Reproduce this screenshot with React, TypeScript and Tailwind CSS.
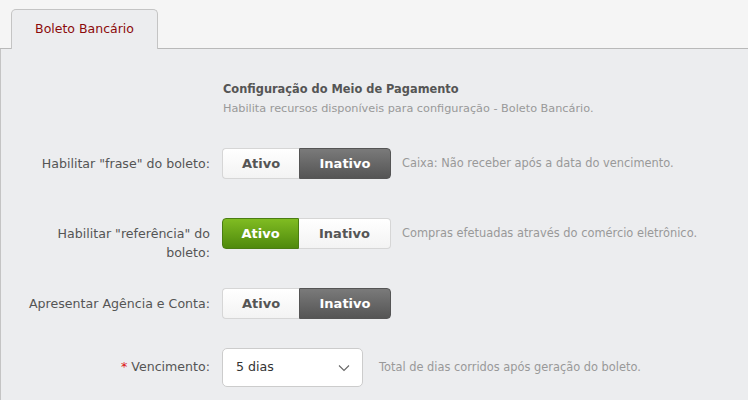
import React from "react";

function Toggle({ on }: { on: boolean }) {
  return (
    <div className="flex h-[31px] w-[169px] shrink-0 rounded-[4px] text-[13px] font-bold">
      <div
        className={
          on
            ? "flex w-[77px] items-center justify-center rounded-l-[4px] border border-[#4a7d12] bg-gradient-to-b from-[#80bc22] to-[#4f8a0c] text-white"
            : "flex w-[77px] items-center justify-center rounded-l-[4px] border border-r-0 border-[#d6d6d6] bg-gradient-to-b from-white to-[#f3f3f3] text-[#555]"
        }
      >
        Ativo
      </div>
      <div
        className={
          on
            ? "flex flex-1 items-center justify-center rounded-r-[4px] border border-l-0 border-[#d6d6d6] bg-gradient-to-b from-white to-[#f3f3f3] text-[#555]"
            : "flex flex-1 items-center justify-center rounded-r-[4px] border border-[#555] bg-gradient-to-b from-[#7a7a7a] to-[#555] text-white"
        }
      >
        Inativo
      </div>
    </div>
  );
}

function Row({ label, children, help }: { label: React.ReactNode; children: React.ReactNode; help: string }) {
  return (
    <div className="flex h-[70px] items-start">
      <div className="w-[210px] shrink-0 pr-[1px] pt-[6px] text-right text-[12.6px] leading-[19px] text-[#555]">{label}</div>
      <div className="ml-[11px]">{children}</div>
      <div className="ml-[11px] pt-[6px] text-[11.4px] leading-[19px] text-[#999]">{help}</div>
    </div>
  );
}

export default function App() {
  return (
    <div className="h-[400px] w-[748px] overflow-hidden bg-[#f5f5f5]" style={{ fontFamily: '"DejaVu Sans", Verdana, sans-serif' }}>
      <div className="flex h-[49px] items-end border-b border-[#b9b9b9] pl-[11px]">
        <div className="-mb-px flex h-[40px] w-[147px] items-center justify-center rounded-t-[5px] border border-b-0 border-[#c4c4c4] bg-[#ecedef] pb-[1px] text-[12.5px] text-[#8b0a0a]">
          Boleto Bancário
        </div>
      </div>
      <div className="h-[351px] border-l border-[#c4c4c4] bg-[#ecedef]">
        <div className="pl-[222px] pt-[31px]">
          <div className="text-[11.4px] font-bold leading-[18px] text-[#555]">Configuração do Meio de Pagamento</div>
          <div className="mt-[2px] text-[11.25px] leading-[17px] text-[#999]">Habilita recursos disponíveis para configuração - Boleto Bancário.</div>
        </div>
        <div className="mt-[31px]">
          <Row label={'Habilitar "frase" do boleto:'} help="Caixa: Não receber após a data do vencimento.">
            <Toggle on={false} />
          </Row>
          <Row label={<>Habilitar "referência" do<br />boleto:</>} help="Compras efetuadas através do comércio eletrônico.">
            <Toggle on={true} />
          </Row>
          <div className="flex h-[60px] items-start">
            <div className="w-[210px] shrink-0 pr-[1px] pt-[6px] text-right text-[12.6px] leading-[19px] text-[#555]">Apresentar Agência e Conta:</div>
            <div className="ml-[11px]">
              <Toggle on={false} />
            </div>
          </div>
        </div>
        <div className="flex items-center">
          <div className="w-[210px] shrink-0 pr-[1px] text-right text-[12.6px] text-[#555]">
            <span className="text-[#d11]">*</span> Vencimento:
          </div>
          <div className="ml-[11px] flex h-[39px] w-[141px] items-center justify-between rounded-[5px] border border-[#ccc] bg-white pl-[13px] pr-[12px] text-[12.6px] text-[#333]">
            <span>5 dias</span>
            <svg width="12" height="8" viewBox="0 0 12 8" fill="none">
              <path d="M1 1.5l5 5 5-5" stroke="#666" strokeWidth="1.1" />
            </svg>
          </div>
          <div className="ml-[16px] text-[11.4px] text-[#999]">Total de dias corridos após geração do boleto.</div>
        </div>
      </div>
    </div>
  );
}
